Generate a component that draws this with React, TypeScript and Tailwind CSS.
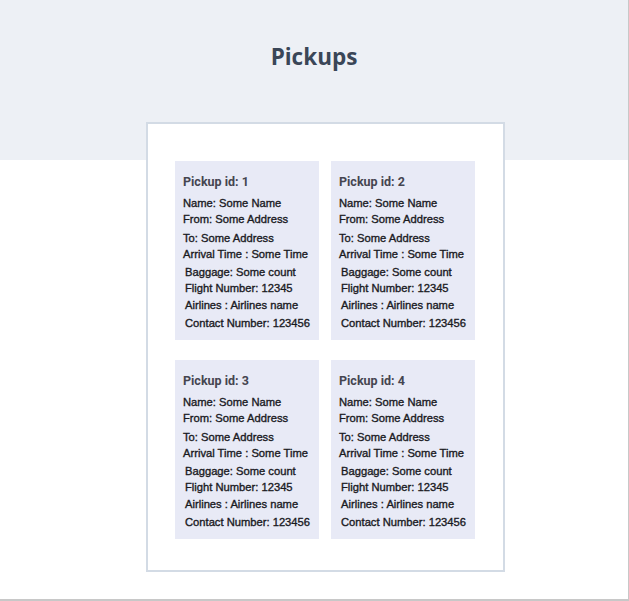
import React from "react";

const lines = [
  { t: "Name: Some Name", mt: "mt-[5px]", ind: "pl-0" },
  { t: "From: Some Address", mt: "mt-0", ind: "pl-0" },
  { t: "To: Some Address", mt: "mt-[3px]", ind: "pl-0" },
  { t: "Arrival Time : Some Time", mt: "mt-0", ind: "pl-0" },
  { t: "Baggage: Some count", mt: "mt-[2px]", ind: "pl-[2px]" },
  { t: "Flight Number: 12345", mt: "mt-0", ind: "pl-[2px]" },
  { t: "Airlines : Airlines name", mt: "mt-[1px]", ind: "pl-[2px]" },
  { t: "Contact Number: 123456", mt: "mt-[2px]", ind: "pl-[2px]" },
];

function Card({ id }: { id: number }) {
  return (
    <div className="w-[144px] h-[179px] bg-[#e8eaf6] pt-[13px] pl-[8px]">
      <div className="h-[16px] leading-[16px] text-[12.5px] font-bold text-[#454550] font-['Roboto',sans-serif]">
        Pickup id: {id}
      </div>
      {lines.map((l) => (
        <div
          key={l.t}
          className={`h-[16px] leading-[16px] text-[11.2px] text-[#1a1a1f] font-['Liberation_Sans',Arial,sans-serif] [-webkit-text-stroke:0.35px_#1a1a1f] whitespace-nowrap ${l.mt} ${l.ind}`}
        >
          {l.t}
        </div>
      ))}
    </div>
  );
}

export default function App() {
  return (
    <div className="w-[629px] h-[601px] bg-white border-r border-b-2 border-[#c8c8c8] overflow-hidden">
      <div className="h-[160px] bg-[#edf0f5] pt-[42px]">
        <h1 className="text-center text-[22.5px] leading-[30px] font-bold text-[#3a4657] font-['Open_Sans',sans-serif]">
          Pickups
        </h1>
      </div>
      <div className="-mt-[38px] ml-[146px] w-[359px] h-[450px] bg-white border-2 border-[#d3dbe5] pt-[37px] pl-[27px]">
        <div className="grid grid-cols-[144px_144px] gap-x-[12px] gap-y-[20px]">
          <Card id={1} />
          <Card id={2} />
          <Card id={3} />
          <Card id={4} />
        </div>
      </div>
    </div>
  );
}
